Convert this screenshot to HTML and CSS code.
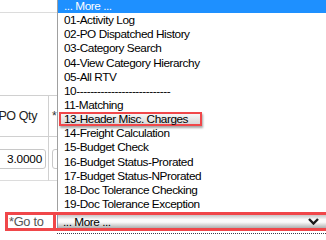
FILE: index.html
```html
<!DOCTYPE html>
<html>
<head>
<meta charset="utf-8">
<link rel="stylesheet" href="styles.css">
</head>
<body>
<div class="page">
  <div class="topbar"></div>
  <div class="grid">
    <div class="hcell c1"><span class="htext">PO Qty</span></div>
    <div class="hcell c2"><span class="star">*</span></div>
    <div class="dcell c1"><div class="inp num">3.0000</div></div>
    <div class="dcell c2"><div class="inp inp2"></div></div>
  </div>
  <div class="gotorow">
    <div class="golabel">*Go to</div>
    <div class="selwrap">
      <div class="sel">
        <span class="seltext">... More ...</span>
        <svg class="chev" width="11" height="7" viewBox="0 0 11 7"><polyline points="1,1 5.5,5.5 10,1" fill="none" stroke="#1a1a1a" stroke-width="2.4"/></svg>
      </div>
    </div>
  </div>
  <div class="focusline"></div>

  <ul class="list">
    <li class="opt sel-opt">... More ...</li>
    <li class="opt">01-Activity Log</li>
    <li class="opt">02-PO Dispatched History</li>
    <li class="opt">03-Category Search</li>
    <li class="opt">04-View Category Hierarchy</li>
    <li class="opt">05-All RTV</li>
    <li class="opt">10---------------------------</li>
    <li class="opt">11-Matching</li>
    <li class="opt"><span class="hl">13-Header Misc. Charges</span></li>
    <li class="opt">14-Freight Calculation</li>
    <li class="opt">15-Budget Check</li>
    <li class="opt">16-Budget Status-Prorated</li>
    <li class="opt">17-Budget Status-NProrated</li>
    <li class="opt">18-Doc Tolerance Checking</li>
    <li class="opt">19-Doc Tolerance Exception</li>
  </ul>
</div>
</body>
</html>
```

FILE: styles.css
```css
html, body {
  margin: 0;
  padding: 0;
  background: #fff;
}
.page {
  position: relative;
  width: 326px;
  height: 237px;
  overflow: hidden;
  font-family: "Liberation Sans", Arial, sans-serif;
  color: #000;
}
.topbar {
  height: 12px;
  border-bottom: 1px solid #dcdcdc;
}
.grid {
  display: grid;
  grid-template-columns: 49px 1fr;
  margin-top: 82px;
}
.hcell {
  height: 40px;
  border-top: 1px solid #d0d0d0;
  border-bottom: 1px solid #d0d0d0;
  display: flex;
  align-items: center;
}
.c1 {
  border-right: 1px solid #d0d0d0;
  overflow: hidden;
}
.hcell.c1 {
  justify-content: flex-end;
}
.htext {
  font-size: 12.5px;
  letter-spacing: -0.4px;
  padding-right: 11px;
  color: #222;
  white-space: nowrap;
}
.star {
  font-size: 12px;
  padding-left: 3px;
  color: #333;
}
.dcell {
  height: 43px;
  border-bottom: 1px solid #dcdcdc;
  display: flex;
  align-items: flex-start;
}
.inp {
  margin-top: 12px;
  height: 18px;
  border: 1px solid #c8c8c8;
  border-radius: 3px;
  background: #fff;
  font-size: 11.8px;
  letter-spacing: -0.2px;
  line-height: 18px;
}
.num {
  margin-left: -6px;
  width: 47px;
  text-align: right;
  padding-right: 3px;
  box-sizing: content-box;
}
.inp2 {
  margin-left: 3px;
  width: 40px;
}
.gotorow {
  display: flex;
  margin-top: 31px;
  height: 19px;
}
.golabel {
  margin-left: 5px;
  width: 44px;
  height: 13px;
  border: 3px solid #f0474a;
  font-size: 12.8px;
  letter-spacing: -0.3px;
  line-height: 13px;
  color: #555;
  padding-left: 1px;
  white-space: nowrap;
}
.selwrap {
  flex: 1;
  border: 3px solid #f0474a;
  border-left: none;
  border-right: none;
  height: 13px;
}
.sel {
  height: 13px;
  margin-left: 1px;
  border-left: 1px solid #8a9bb8;
  display: flex;
  align-items: center;
  justify-content: space-between;
  background: linear-gradient(#c8c8c8, #fafafa 35%, #fafafa 55%, #b0b0b0);
  padding-left: 5px;
  padding-right: 7px;
}
.seltext {
  font-size: 11.8px;
  letter-spacing: -0.45px;
}
.chev {
  display: block;
}
.focusline {
  margin-left: 57px;
  margin-top: 2px;
  border-top: 1px dotted #3a3a4a;
}
.list {
  position: absolute;
  left: 57px;
  top: -1px;
  width: 275px;
  margin: 0;
  padding: 0;
  list-style: none;
  background: #fff;
  border-left: 1px solid #a0a0a0;
}
.opt {
  height: 14.15px;
  line-height: 14.15px;
  font-size: 11.8px;
  letter-spacing: -0.45px;
  padding-left: 6px;
  white-space: nowrap;
}
.sel-opt {
  background: #1e90ff;
  color: #fff;
}
.hl {
  display: inline-block;
  box-sizing: border-box;
  width: 143px;
  margin-left: -5px;
  padding: 0 0 0 3px;
  height: 14px;
  line-height: 10px;
  border: 2px solid #f0474a;
  background: linear-gradient(#f6f6f6, #d8d8d8);
  box-shadow: 1px 2px 2px rgba(0,0,0,0.35);
  vertical-align: top;
}
```
